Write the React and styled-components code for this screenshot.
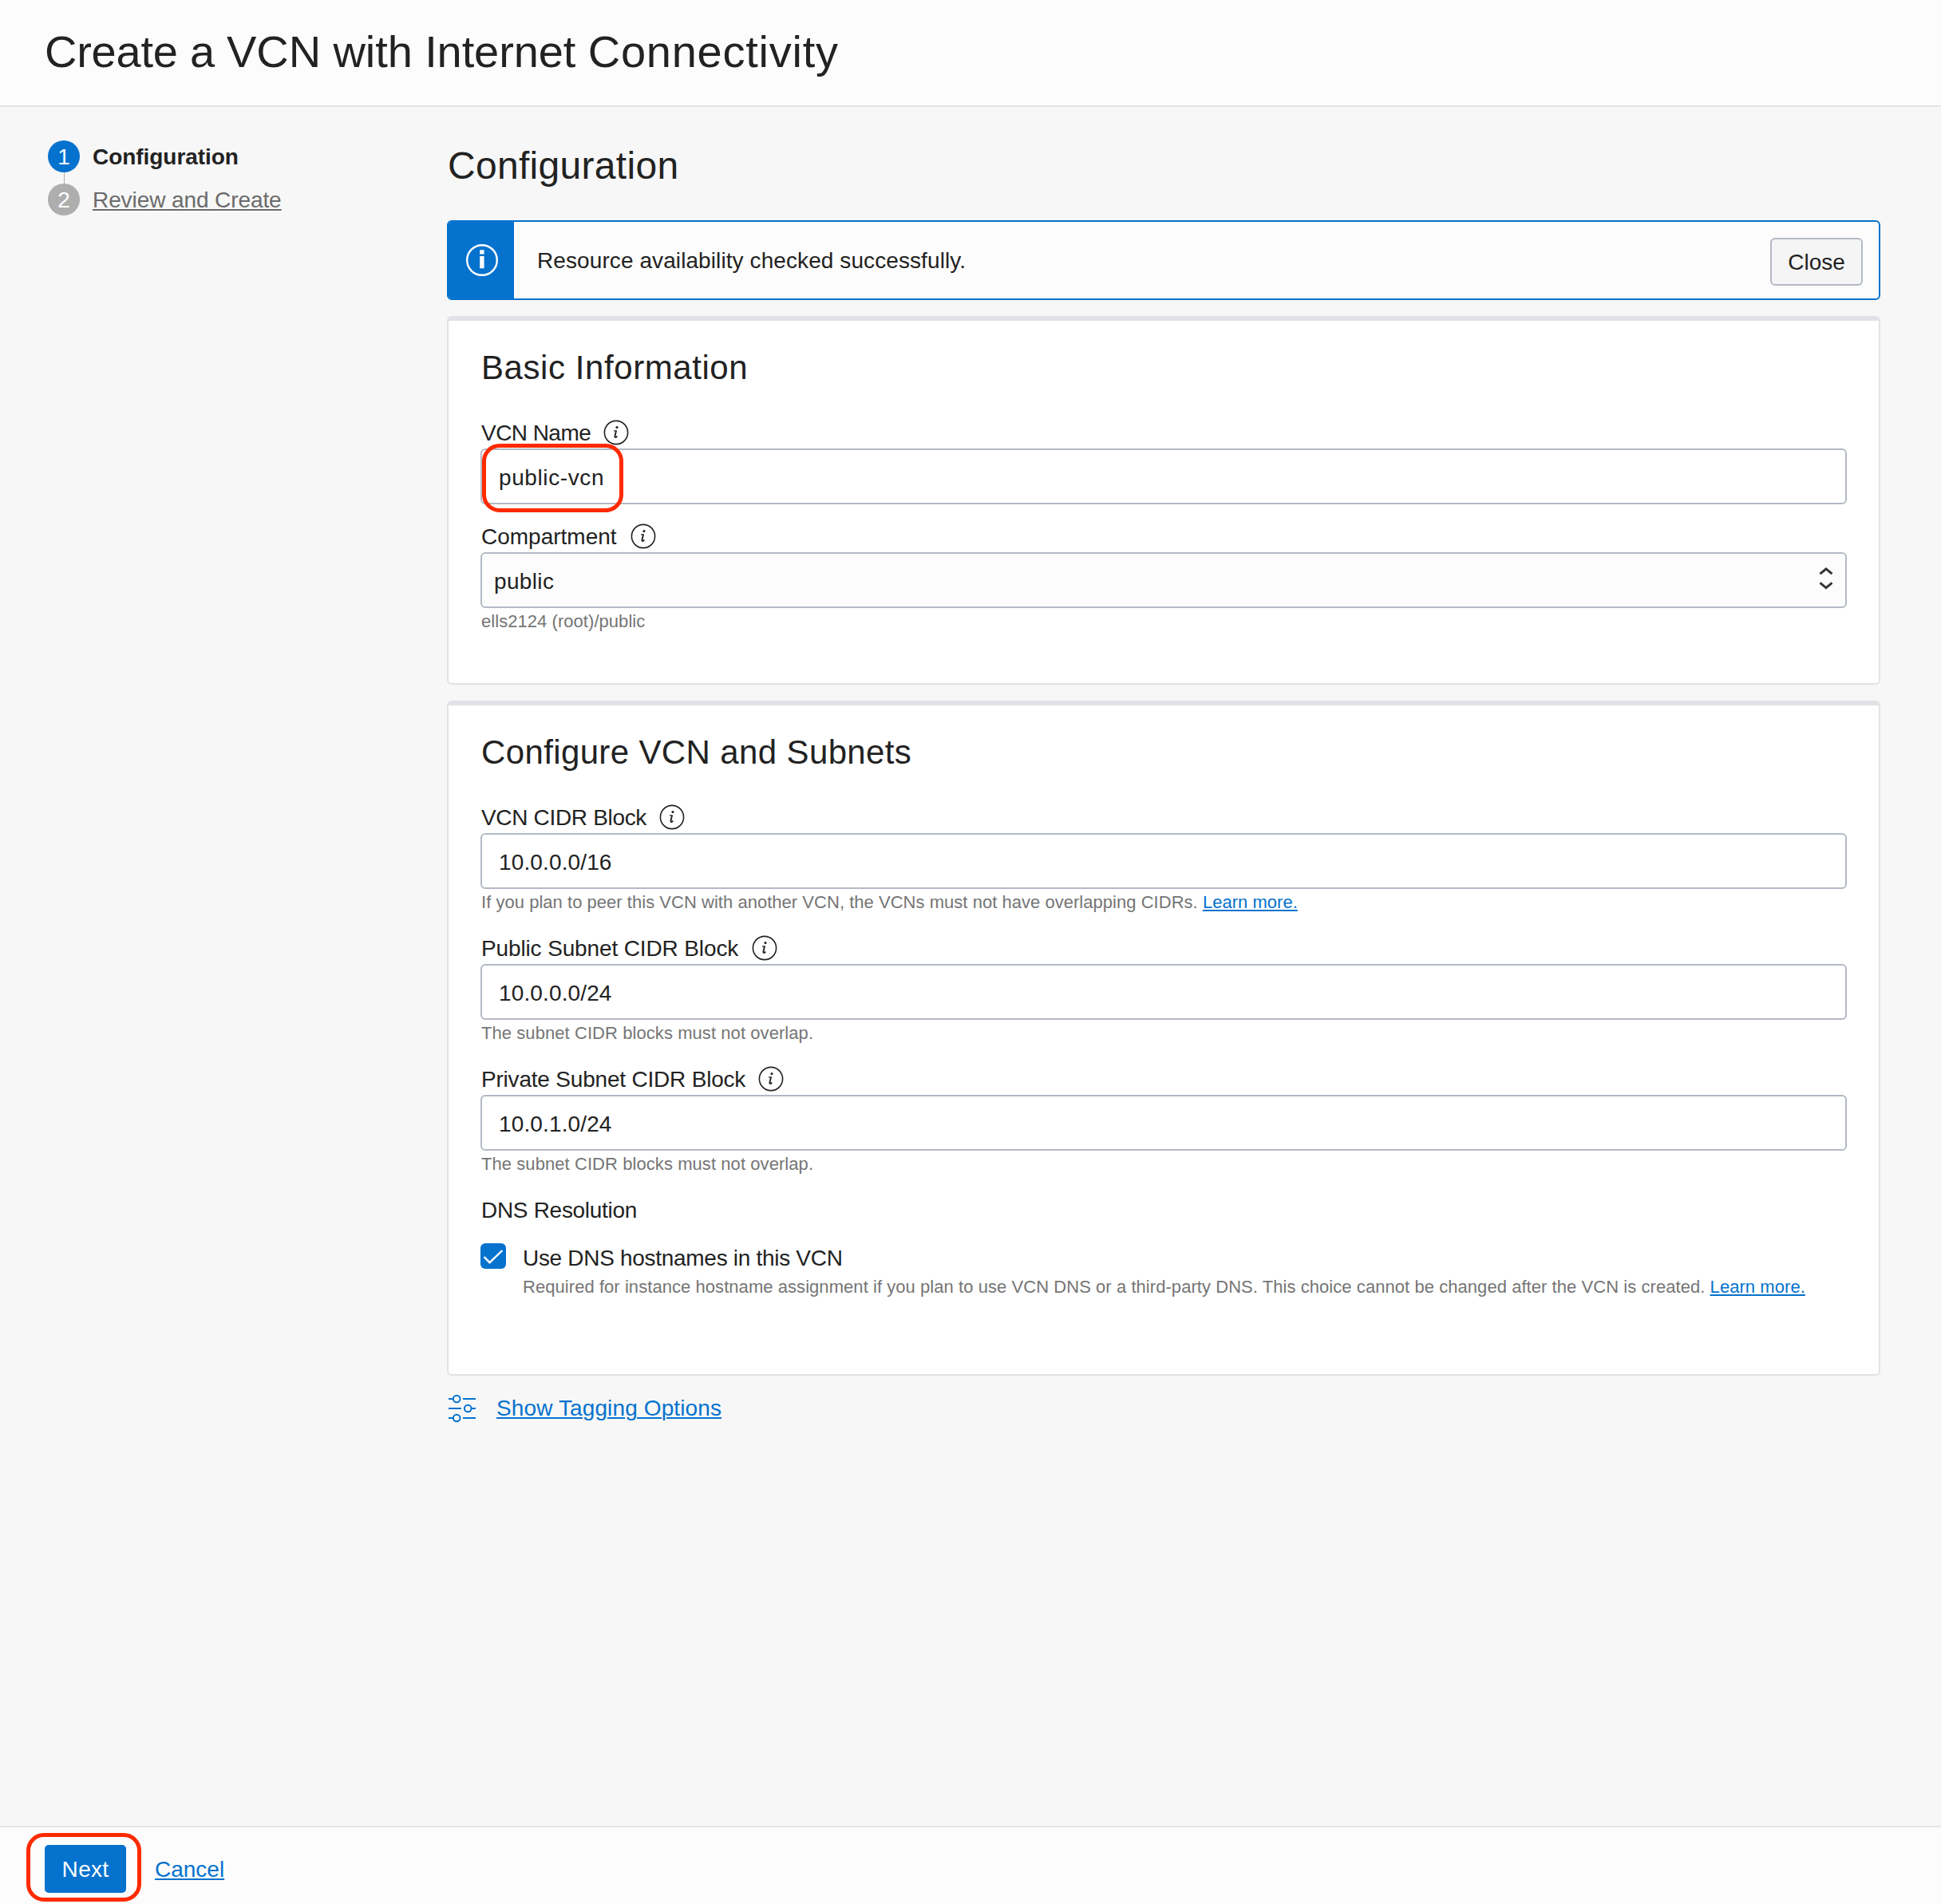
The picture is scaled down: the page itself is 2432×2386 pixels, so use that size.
import React from "react";
import styled, { createGlobalStyle } from "styled-components";

const GlobalStyle = createGlobalStyle`
  * { box-sizing: border-box; }
  body { margin: 0; background: #f7f7f7; }
  h1, h2, h3, p { margin: 0; font-weight: 400; }
`;

const Page = styled.div`
  display: flex;
  flex-direction: column;
  width: 2432px;
  height: 2386px;
  background: #f7f7f7;
  color: #222;
  font-family: "Liberation Sans", Arial, sans-serif;
  font-size: 28px;
  line-height: 34px;
  overflow: hidden;
`;

const Header = styled.header`
  height: 134px;
  flex: none;
  padding: 33px 56px 0;
  background: #fcfcfc;
  border-bottom: 2px solid #e5e5e5;
`;

const PageTitle = styled.h1`
  font-size: 56px;
  line-height: 64px;
`;

const Tracked = styled.span`
  letter-spacing: ${(p) => p.$track || 0}px;
`;

const Body = styled.div`
  flex: 1;
  display: grid;
  grid-template-columns: 500px 1796px;
  padding-left: 60px;
`;

const Steps = styled.nav`
  display: flex;
  flex-direction: column;
  padding-top: 42px;
`;

const Step = styled.div`
  display: flex;
  align-items: center;
  gap: 16px;
  height: 40px;
`;

const StepNumber = styled.span`
  width: 40px;
  height: 40px;
  border-radius: 50%;
  background: ${(p) => (p.$active ? "#0572ce" : "#aeaeae")};
  color: #fff;
  line-height: 42px;
  text-align: center;
`;

const StepLine = styled.div`
  width: 1px;
  height: 14px;
  margin-left: 20px;
  background: #aeaeae;
`;

const StepLabel = styled.span`
  padding-top: 2px;
  font-weight: ${(p) => (p.$active ? 700 : 400)};
  color: ${(p) => (p.$active ? "#222" : "#6b6b6b")};
  text-decoration: ${(p) => (p.$active ? "none" : "underline")};
  text-decoration-thickness: 2px;
  text-underline-offset: 2px;
  letter-spacing: ${(p) => p.$track || 0}px;
`;

const Main = styled.main`
  display: flex;
  flex-direction: column;
`;

const Heading = styled.h2`
  font-size: 48px;
  line-height: 56px;
  letter-spacing: 0.3px;
  padding: 46px 0 0 1px;
  height: 142px;
`;

const Alert = styled.div`
  display: flex;
  height: 100px;
  flex: none;
  border: 2px solid #0572ce;
  border-radius: 6px;
  background: #fcfcfc;
  overflow: hidden;
`;

const AlertIcon = styled.div`
  width: 82px;
  padding: 28px 0 0 22px;
  background: #0572ce;
`;

const AlertText = styled.p`
  flex: 1;
  padding: 32px 0 0 29px;
  letter-spacing: 0.09px;
`;

const CloseButton = styled.button`
  width: 116px;
  height: 60px;
  margin: 20px 20px 0 0;
  padding: 2px 0 0;
  border: 2px solid #b3b9c4;
  border-radius: 6px;
  background: #f5f5f5;
  color: #222;
  font: inherit;
`;

const Card = styled.section`
  height: ${(p) => p.$height}px;
  flex: none;
  margin-top: 20px;
  padding: 35px 40px 0;
  background: #fff;
  border: 2px solid #e1e2e6;
  border-top-width: 6px;
  border-radius: 6px;
`;

const CardTitle = styled.h3`
  font-size: 42px;
  line-height: 48px;
  height: 85px;
  padding-left: 1px;
  letter-spacing: ${(p) => p.$track}px;
`;

const Field = styled.div`
  height: ${(p) => p.$height}px;
`;

const Label = styled.label`
  display: flex;
  height: 40px;
  padding: 4px 0 0 1px;
  letter-spacing: ${(p) => p.$track || 0}px;
`;

const LabelText = styled.span`
  display: block;
  width: ${(p) => p.$width}px;
  white-space: nowrap;
`;

const Control = styled.div`
  position: relative;
  display: flex;
  justify-content: space-between;
  height: 70px;
  padding: 18px 15px 0 ${(p) => (p.$select ? 15 : 21)}px;
  border: 2px solid #b3b9c4;
  border-radius: 6px;
  background: ${(p) => (p.$select ? "#fcfcfc" : "#fff")};
`;

const Hint = styled.p`
  padding: ${(p) => (p.$option ? "6px 0 0 0" : "4px 0 0 1px")};
  font-size: 22px;
  line-height: 26px;
  color: #757575;
  white-space: nowrap;
  letter-spacing: ${(p) => p.$track || 0}px;
`;

const Link = styled.a`
  color: #0572ce;
  text-decoration: underline;
  text-decoration-thickness: 2px;
  text-underline-offset: 2px;
`;

const Highlight = styled.div`
  position: absolute;
  left: ${(p) => p.$left}px;
  top: ${(p) => p.$top}px;
  width: ${(p) => p.$width}px;
  height: 86px;
  border: 5px solid #ff2a00;
  border-radius: 22px;
  pointer-events: none;
`;

const GroupLabel = styled.p`
  height: 62px;
  padding: 4px 0 0 1px;
  letter-spacing: -0.3px;
`;

const CheckRow = styled.div`
  display: grid;
  grid-template-columns: 53px 1fr;
`;

const CheckBox = styled.span`
  display: block;
  width: 32px;
  height: 32px;
  border-radius: 6px;
  background: #0572ce;
`;

const CheckLabel = styled.p`
  padding-top: 2px;
  letter-spacing: -0.3px;
`;

const Tagging = styled.div`
  display: flex;
  padding: 24px 0 0 2px;
  gap: 26px;
  letter-spacing: 0.12px;
`;

const Footer = styled.footer`
  position: relative;
  display: flex;
  height: 98px;
  flex: none;
  padding: 22px 56px 0;
  gap: 36px;
  background: #fcfcfc;
  border-top: 2px solid #e5e5e5;
`;

const NextButton = styled.button`
  width: 102px;
  height: 60px;
  padding: 2px 0 0;
  border: 0;
  border-radius: 5px;
  background: #0572ce;
  color: #fff;
  font: inherit;
  letter-spacing: 0.3px;
`;

const FooterLink = styled.div`
  padding-top: 14px;
`;

const SlidersSvg = styled.svg`
  margin-top: -1px;
`;

const ChevronsSvg = styled.svg`
  margin-top: -6px;
`;

const InfoIcon = () => (
  <svg width="32" height="32" viewBox="0 0 32 32" fill="none">
    <circle cx="16" cy="16" r="14.6" stroke="#222" strokeWidth="1.6" />
    <circle cx="17" cy="9.5" r="1.6" fill="#222" />
    <path d="M13.1 13.9h3.4" stroke="#222" strokeWidth="1.3" />
    <path d="M16.1 13.6l-1.7 7.2c-.2 1 .6 1.3 1.3 1l1.7-1" stroke="#222" strokeWidth="1.9" />
  </svg>
);

const AlertInfoIcon = () => (
  <svg width="40" height="40" viewBox="0 0 40 40" fill="none">
    <circle cx="20" cy="20" r="18.8" stroke="#fff" strokeWidth="2.4" />
    <path d="M17.2 7.2h5.4v5.4h-5.4zM17.2 15h5.4v15.2h-5.4z" fill="#fff" />
  </svg>
);

const Chevrons = () => (
  <ChevronsSvg width="18" height="34" viewBox="0 0 18 34" fill="none" stroke="#333" strokeWidth="2.9">
    <path d="M1.5 13.2L9 7l7.5 6.2M1.5 24.4L9 30.7l7.5-6.3" />
  </ChevronsSvg>
);

const CheckIcon = () => (
  <svg width="32" height="32" viewBox="0 0 32 32" fill="none" stroke="#fff" strokeWidth="2.4">
    <path d="M4.5 17l7 7.2L27.4 9" />
  </svg>
);

const SlidersIcon = () => (
  <SlidersSvg width="34" height="36" viewBox="0 0 34 36" fill="none" stroke="#0572ce" strokeWidth="2">
    <path d="M0 6h5M18 6h16M0 18h16M29 18H34M0 30h5M18 30h16" />
    <circle cx="10.2" cy="6" r="4.3" />
    <circle cx="24.2" cy="18" r="4.3" />
    <circle cx="10.2" cy="30" r="4.3" />
  </SlidersSvg>
);

function TextField({ label, labelWidth, track, value, hint, link, hintTrack, height, select, valueTrack, marked }) {
  return (
    <Field $height={height}>
      <Label $track={track}>
        <LabelText $width={labelWidth}>{label}</LabelText>
        <InfoIcon />
      </Label>
      <Control $select={select}>
        <Tracked $track={valueTrack}>{value}</Tracked>
        {select && <Chevrons />}
        {marked && <Highlight $left={0} $top={-8} $width={177} />}
      </Control>
      {hint && (
        <Hint $track={hintTrack}>
          {hint} {link && <Link>{link}</Link>}
        </Hint>
      )}
    </Field>
  );
}

export default function App() {
  return (
    <Page>
      <GlobalStyle />
      <Header>
        <PageTitle>
          <Tracked $track={-0.25}>Create a </Tracked>
          <Tracked $track={-0.1}>VCN with Internet </Tracked>
          <Tracked $track={0.75}>Connectivity</Tracked>
        </PageTitle>
      </Header>
      <Body>
        <Steps>
          <Step>
            <StepNumber $active>1</StepNumber>
            <StepLabel $active $track={-0.05}>Configuration</StepLabel>
          </Step>
          <StepLine />
          <Step>
            <StepNumber>2</StepNumber>
            <StepLabel $track={-0.09}>Review and Create</StepLabel>
          </Step>
        </Steps>
        <Main>
          <Heading>Configuration</Heading>
          <Alert>
            <AlertIcon><AlertInfoIcon /></AlertIcon>
            <AlertText>Resource availability checked successfully.</AlertText>
            <CloseButton>Close</CloseButton>
          </Alert>
          <Card $height={462}>
            <CardTitle $track={0.57}>Basic Information</CardTitle>
            <TextField label="VCN Name" labelWidth={153} track={-0.55} value="public-vcn" valueTrack={0.6} height={130} marked />
            <TextField label="Compartment" labelWidth={187} value="public" valueTrack={0.35} height={130} select hint="ells2124 (root)/public" hintTrack={0.05} />
          </Card>
          <Card $height={846}>
            <CardTitle $track={0.37}>Configure VCN and Subnets</CardTitle>
            <TextField
              label="VCN CIDR Block"
              labelWidth={223}
              track={-0.33}
              value="10.0.0.0/16"
              valueTrack={0.13}
              height={164}
              hint="If you plan to peer this VCN with another VCN, the VCNs must not have overlapping CIDRs."
              hintTrack={0.03}
              link="Learn more."
            />
            <TextField
              label="Public Subnet CIDR Block"
              labelWidth={339}
              track={-0.13}
              value="10.0.0.0/24"
              valueTrack={0.13}
              height={164}
              hint="The subnet CIDR blocks must not overlap."
              hintTrack={0.07}
            />
            <TextField
              label="Private Subnet CIDR Block"
              labelWidth={347}
              track={-0.2}
              value="10.0.1.0/24"
              valueTrack={0.13}
              height={164}
              hint="The subnet CIDR blocks must not overlap."
              hintTrack={0.07}
            />
            <GroupLabel>DNS Resolution</GroupLabel>
            <CheckRow>
              <CheckBox><CheckIcon /></CheckBox>
              <div>
                <CheckLabel>Use DNS hostnames in this VCN</CheckLabel>
                <Hint $option $track={0.057}>
                  Required for instance hostname assignment if you plan to use VCN DNS or a third-party DNS. This choice cannot be changed after the VCN is created. <Link>Learn more.</Link>
                </Hint>
              </div>
            </CheckRow>
          </Card>
          <Tagging>
            <SlidersIcon />
            <Link>Show Tagging Options</Link>
          </Tagging>
        </Main>
      </Body>
      <Footer>
        <NextButton>Next</NextButton>
        <FooterLink><Link>Cancel</Link></FooterLink>
        <Highlight $left={33} $top={7} $width={144} />
      </Footer>
    </Page>
  );
}
